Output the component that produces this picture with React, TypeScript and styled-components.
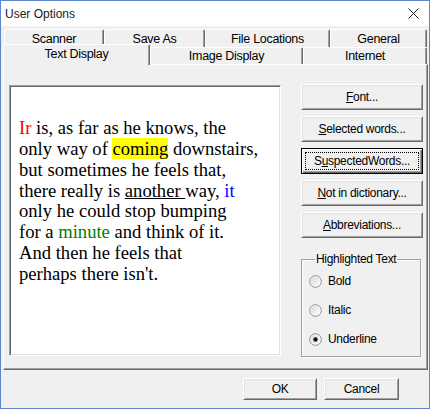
import React from "react";
import styled, { createGlobalStyle } from "styled-components";

const GlobalStyle = createGlobalStyle`
  html, body { margin: 0; padding: 0; background: #fff; }
  * { box-sizing: border-box; }
`;

const uiFont = `"Liberation Sans", Arial, sans-serif`;

const Window = styled.div`
  width: 430px;
  height: 409px;
  border: 1px solid #5c86d2;
  display: flex;
  flex-direction: column;
  background: #f0f0f0;
  font-family: ${uiFont};
  font-size: 12px;
  letter-spacing: -0.3px;
  color: #000;
  overflow: hidden;
`;

const TitleBar = styled.div`
  height: 25px;
  flex: none;
  background: #fff;
  display: flex;
  align-items: center;
  justify-content: space-between;
  padding: 0 10px 0 4px;
  font-size: 12px;
  letter-spacing: 0;
  color: #1a1a1a;
`;

const Body = styled.div`
  flex: 1;
  display: flex;
  flex-direction: column;
  padding: 3px 1px 0 2px;
`;

const TabRow = styled.div<{ $indent?: number; $h: number }>`
  display: flex;
  height: ${(p) => p.$h}px;
  align-items: flex-end;
  margin-left: ${(p) => p.$indent ?? 0}px;
`;

const Tab = styled.div<{ $w: number; $h: number; $active?: boolean }>`
  width: ${(p) => p.$w}px;
  height: ${(p) => p.$h}px;
  margin-bottom: ${(p) => (p.$active ? -1 : 0)}px;
  position: ${(p) => (p.$active ? "relative" : "static")};
  z-index: ${(p) => (p.$active ? 2 : 0)};
  background: #f0f0f0;
  border-top: 1px solid #fff;
  border-left: 1px solid #fff;
  border-right: 1px solid #696969;
  box-shadow: inset -1px 0 #a0a0a0;
  border-radius: 2px 2px 0 0;
  display: flex;
  align-items: center;
  justify-content: center;
  padding-bottom: ${(p) => (p.$active ? 2 : 0)}px;
  font-size: 12.5px;
  flex: none;
`;

const Panel = styled.div`
  height: 306px;
  border-top: 1px solid #fff;
  border-left: 1px solid #fff;
  border-right: 1px solid #696969;
  border-bottom: 1px solid #696969;
  box-shadow: inset -1px -1px #a0a0a0;
  display: flex;
  gap: 20px;
  padding: 20px 0 0 5px;
`;

const TextBox = styled.div`
  width: 272px;
  height: 271px;
  background: #fff;
  border-top: 1px solid #a0a0a0;
  border-left: 1px solid #a0a0a0;
  border-right: 1px solid #fff;
  border-bottom: 1px solid #fff;
  box-shadow: inset 1px 1px #696969, inset -1px -1px #e3e3e3;
  padding: 32px 0 0 9px;
  font-family: "Liberation Serif", "Times New Roman", serif;
  font-size: 18.6px;
  line-height: 20.85px;
  letter-spacing: 0;
  color: #000;
  white-space: nowrap;
`;

const Colored = styled.span<{ $c: string }>`
  color: ${(p) => p.$c};
`;

const Marked = styled.span`
  background: #ffff00;
`;

const Side = styled.div`
  width: 122px;
  margin-top: -1px;
  display: flex;
  flex-direction: column;
  gap: 6px;
`;

const Button = styled.div<{ $w?: number; $h?: number; $focus?: boolean }>`
  width: ${(p) => (p.$w ? `${p.$w}px` : "100%")};
  height: ${(p) => p.$h ?? 26}px;
  flex: none;
  background: #f0f0f0;
  border: 1px solid;
  border-color: ${(p) => (p.$focus ? "#000" : "#fff #696969 #696969 #fff")};
  box-shadow: ${(p) =>
    p.$focus
      ? "inset 1px 1px #fff, inset -1px -1px #696969, inset -2px -2px #a0a0a0"
      : "inset 1px 1px #e3e3e3, inset -1px -1px #a0a0a0"};
  display: flex;
  align-items: center;
  justify-content: center;
  padding: ${(p) => (p.$focus ? 3 : 0)}px;
`;

const Focus = styled.span`
  width: 100%;
  height: 100%;
  border: 1px dotted #000;
  display: flex;
  align-items: center;
  justify-content: center;
`;

const Group = styled.fieldset`
  margin: 8px 0 0 0;
  width: 120px;
  height: 105px;
  padding: 6px 0 0 7px;
  border: 1px solid #a0a0a0;
  box-shadow: 1px 1px #fff, inset 1px 1px #fff;
  display: flex;
  flex-direction: column;
  gap: 11px;
`;

const Legend = styled.legend`
  padding: 0 1px;
  margin-left: 6px;
`;

const RadioRow = styled.label`
  display: flex;
  align-items: center;
  gap: 6px;
  height: 18px;
`;

const Footer = styled.div`
  flex: 1;
  display: flex;
  justify-content: flex-end;
  gap: 7px;
  padding: 8px 29px 0 0;
`;

function Radio({ checked }: { checked?: boolean }) {
  const id = checked ? "rg1" : "rg0";
  return (
    <svg width="13" height="13" viewBox="0 0 13 13">
      <defs>
        <linearGradient id={id} x1="0" y1="0" x2="1" y2="1">
          <stop offset="0" stopColor="#d8d8d8" />
          <stop offset="1" stopColor="#ffffff" />
        </linearGradient>
      </defs>
      <circle cx="6.5" cy="6.5" r="5.8" fill="#fff" stroke="#8a8a8a" strokeWidth="1" />
      <circle cx="6.5" cy="6.5" r="4.6" fill={`url(#${id})`} />
      {checked && <circle cx="6.5" cy="6.5" r="2.2" fill="#111" />}
    </svg>
  );
}

export default function App() {
  return (
    <>
      <GlobalStyle />
      <Window>
        <TitleBar>
          <span>User Options</span>
          <svg width="11" height="11" viewBox="0 0 11 11">
            <path d="M0.5 0.5 L10.5 10.5 M10.5 0.5 L0.5 10.5" stroke="#222" strokeWidth="1" />
          </svg>
        </TitleBar>
        <Body>
          <TabRow $indent={1} $h={18}>
            <Tab $w={100} $h={18}>Scanner</Tab>
            <Tab $w={101} $h={18}>Save As</Tab>
            <Tab $w={125} $h={18}>File Locations</Tab>
            <Tab $w={97} $h={18}>General</Tab>
          </TabRow>
          <TabRow $h={17}>
            <Tab $w={147} $h={21} $active>Text Display</Tab>
            <Tab $w={153} $h={17}>Image Display</Tab>
            <Tab $w={124} $h={17}>Internet</Tab>
          </TabRow>
          <Panel>
            <TextBox>
              <Colored $c="#ff0000">Ir</Colored> is, as far as he knows, the
              <br />
              only way of <Marked>coming</Marked> downstairs,
              <br />
              but sometimes he feels that,
              <br />
              there really is <u>another </u>way, <Colored $c="#0000ff">it</Colored>
              <br />
              only he could stop bumping
              <br />
              for a <Colored $c="#008000">minute</Colored> and think of it.
              <br />
              And then he feels that
              <br />
              perhaps there isn't.
            </TextBox>
            <Side>
              <Button><span><u>F</u>ont...</span></Button>
              <Button><span><u>S</u>elected words...</span></Button>
              <Button $focus>
                <Focus>S<u>u</u>spectedWords...</Focus>
              </Button>
              <Button><span><u>N</u>ot in dictionary...</span></Button>
              <Button><span><u>A</u>bbreviations...</span></Button>
              <Group>
                <Legend>Highlighted Text</Legend>
                <RadioRow><Radio />Bold</RadioRow>
                <RadioRow><Radio />Italic</RadioRow>
                <RadioRow><Radio checked />Underline</RadioRow>
              </Group>
            </Side>
          </Panel>
          <Footer>
            <Button $w={74} $h={22}>OK</Button>
            <Button $w={75} $h={22}>Cancel</Button>
          </Footer>
        </Body>
      </Window>
    </>
  );
}
